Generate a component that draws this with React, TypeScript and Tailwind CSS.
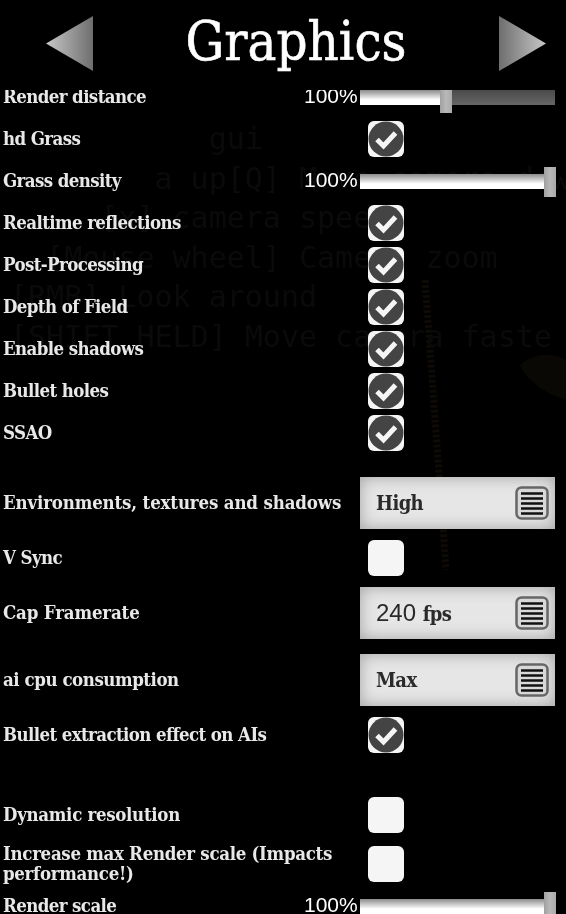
import * as React from "react";

const serif = "font-['DejaVu_Serif',serif] font-stretch-condensed font-bold";

const Arrow = ({ flip }: { flip?: boolean }) => (
    <svg width="47" height="55" viewBox="0 0 47 55" className={flip ? "rotate-180" : ""}>
        <defs>
            <linearGradient id={flip ? "arrowB" : "arrowA"} x1="0" x2="1" y1="0" y2="0">
                <stop offset="0" stopColor="#c8c8c8" />
                <stop offset="1" stopColor="#6e6e6e" />
            </linearGradient>
        </defs>
        <path d="M0 27.5 47 0V55Z" fill={`url(#${flip ? "arrowB" : "arrowA"})`} />
    </svg>
);

const Check = ({ on }: { on?: boolean }) => (
    <div className="ml-2 w-9 h-9 rounded-md bg-[#f5f5f5] overflow-hidden shrink-0">
        {on && (
            <svg width="36" height="36" viewBox="0 0 36 36">
                <circle cx="18" cy="18" r="17.5" fill="#444" />
                <path d="M9 18.5 15.5 25 27.5 12" fill="none" stroke="#f5f5f5" strokeWidth="5" />
            </svg>
        )}
    </div>
);

const Slider = ({ fill }: { fill: number }) => (
    <div className="flex items-center">
        <span className="w-[54px] -ml-[56px] mr-[2px] -mt-[3px] text-[21px] leading-none text-white font-normal tracking-normal font-['Liberation_Sans',sans-serif]">100%</span>
        <div className="relative w-[195px] h-[15px] bg-gradient-to-b from-[#4a4a4a] to-[#666]">
            <div
                className="h-full bg-gradient-to-b from-[#8c8c8c] via-white via-65% to-white"
                style={{ width: `${fill}px` }}
            />
            <div
                className="absolute top-[-7px] w-3 h-[30px] bg-gradient-to-r from-[#a0a0a0] via-[#b8b8b8] to-[#aaa]"
                style={{ left: `${fill}px` }}
            />
        </div>
    </div>
);

const MenuIcon = () => (
    <svg width="34" height="34" viewBox="0 0 34 34" className="shrink-0">
        <rect x="1.5" y="1.5" width="31" height="31" rx="5" fill="#d8d8d8" stroke="#666" strokeWidth="2.5" />
        <path d="M6 7.5H28M6 12.5H28M6 17.5H28M6 22.5H28M6 27.5H28" stroke="#111" strokeWidth="2.5" />
    </svg>
);

const Dropdown = ({ children }: { children: React.ReactNode }) => (
    <div className="w-[195px] h-[52px] flex items-center justify-between pl-4 pr-[6px] bg-[#e6e6e6] shadow-[inset_0_0_16px_rgba(0,0,0,0.3)] text-[#2a2a2a] text-[20px]">
        <span>{children}</span>
        <MenuIcon />
    </div>
);

interface IRow {
    label: string;
    children?: React.ReactNode;
    className?: string;
    labelClass?: string;
}

const Row = ({ label, children, className, labelClass }: IRow) => (
    <div className={`flex items-center pl-[3px] ${className ?? "h-[42px]"}`}>
        <div className={`w-[357px] pb-[1px] pr-1 text-[18.5px] leading-[20px] text-[#e8e8e8] ${labelClass ?? ""}`}>{label}</div>
        {children}
    </div>
);

export default function App() {
    return (
        <div className={`relative w-[566px] h-[914px] bg-black overflow-hidden tracking-[-0.6px] blur-[0.35px] ${serif}`}>
            {/* scene and console text showing through behind the menu */}
            <svg width="566" height="914" className="absolute inset-0">
                <path d="M425 280 446 570" fill="none" stroke="#0e0b06" strokeWidth="7" strokeDasharray="3 2" />
                <path d="M520 365C535 350 560 355 566 360V400C550 395 530 385 520 365Z" fill="#0a0805" />
            </svg>
            <pre className="absolute left-[10px] top-[119px] text-[30px] leading-[39.5px] tracking-normal font-normal text-[#0a0a0a] font-['DejaVu_Sans_Mono',monospace]">
                {"           gui\n"}
                {"        a up[Q] Move camera dow\n"}
                {"     [x] camera speed\n"}
                {"  [Mouse wheel] Camera zoom\n"}
                {"[RMB] Look around\n"}
                {"[SHIFT HELD] Move camera faste"}
            </pre>

            <div className="relative flex flex-col h-full">
                <div className="h-[90px] shrink-0 flex items-start justify-between pt-[16px] pl-[46px] pr-[20px]">
                    <Arrow />
                    <h1 className="mt-[1px] text-[54px] leading-[50px] tracking-normal text-white font-medium [-webkit-text-stroke:0.6px_white]">Graphics</h1>
                    <Arrow flip />
                </div>
                <div className="flex-1 overflow-hidden">
                    <div className="-mt-[14px]">
                        <Row label="Render distance"><Slider fill={80} /></Row>
                        <Row label="hd Grass"><Check on /></Row>
                        <Row label="Grass density"><Slider fill={184} /></Row>
                        <Row label="Realtime reflections"><Check on /></Row>
                        <Row label="Post-Processing"><Check on /></Row>
                        <Row label="Depth of Field"><Check on /></Row>
                        <Row label="Enable shadows"><Check on /></Row>
                        <Row label="Bullet holes"><Check on /></Row>
                        <Row label="SSAO"><Check on /></Row>
                        <Row label="Environments, textures and shadows" labelClass="tracking-[-0.15px]" className="h-[52px] mt-[23px]"><Dropdown>High</Dropdown></Row>
                        <Row label="V Sync" className="h-[58px]"><Check /></Row>
                        <Row label="Cap Framerate" labelClass="tracking-[-0.15px]" className="h-[52px]">
                            <Dropdown><span className="font-['Liberation_Sans',sans-serif] font-normal text-[24px] tracking-normal">240 </span>fps</Dropdown>
                        </Row>
                        <Row label="ai cpu consumption" labelClass="tracking-[-0.45px]" className="h-[52px] mt-[15px]"><Dropdown>Max</Dropdown></Row>
                        <Row label="Bullet extraction effect on AIs" className="h-[58px]"><Check on /></Row>
                        <Row label="Dynamic resolution" labelClass="tracking-[-0.3px]" className="h-[42px] mt-[30px]"><Check /></Row>
                        <Row label="Increase max Render scale (Impacts performance!)" labelClass="tracking-[-0.3px]" className="h-[42px] mt-[7px]"><Check /></Row>
                        <Row label="Render scale"><Slider fill={184} /></Row>
                    </div>
                </div>
            </div>
        </div>
    );
}
